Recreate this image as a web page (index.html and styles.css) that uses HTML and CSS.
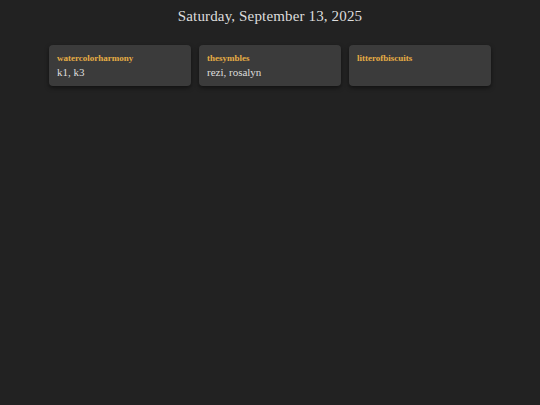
FILE: index.html
```html
<!DOCTYPE html>
<html lang="en">
<head>
  <meta charset="UTF-8" />
  <meta name="viewport" content="width=device-width, initial-scale=1.0"/>
  <title>schedule</title>
  <link rel="stylesheet" href="styles.css">
</head>
<body>
  <div class="container">
    <h1 class="date">Saturday, September 13, 2025</h1>

    <div class="groups">
      <div class="group">
        <div class="group-name">watercolorharmony</div>
        <div class="group-members">k1, k3</div>
      </div>
      <div class="group">
        <div class="group-name">thesymbles</div>
        <div class="group-members">rezi, rosalyn</div>
      </div>
      <div class="group">
        <div class="group-name">litterofbiscuits</div>
        <div class="group-members"></div>
      </div>
    </div>
  </div>
</body>
</html>
```

FILE: styles.css
```css
body {
  margin: 0;
  padding: 0;
  font-family: "Liberation Serif", "Times New Roman", serif;
  background-color: #222222;
  color: #e0e0e0;
}

.container {
  max-width: 442px;
  margin: 0 auto;
  padding: 8px 0;
}

.date {
  text-align: center;
  font-size: 15px;
  line-height: 17px;
  font-weight: normal;
  letter-spacing: 0.15px;
  color: #dddddd;
  margin: 0 0 20px;
}

.groups {
  display: grid;
  grid-template-columns: repeat(3, 1fr);
  gap: 8px;
}

.group {
  background-color: #3b3b3b;
  border-radius: 4px;
  box-shadow: 0 2px 4px rgba(0, 0, 0, 0.5);
  padding: 8px 8px 7px;
}

.group-name {
  font-size: 9px;
  line-height: 11px;
  font-weight: bold;
  color: #e6ad45;
  margin-bottom: 2px;
}

.group-members {
  font-size: 11px;
  line-height: 13px;
  min-height: 13px;
  color: #dddddd;
}
```
